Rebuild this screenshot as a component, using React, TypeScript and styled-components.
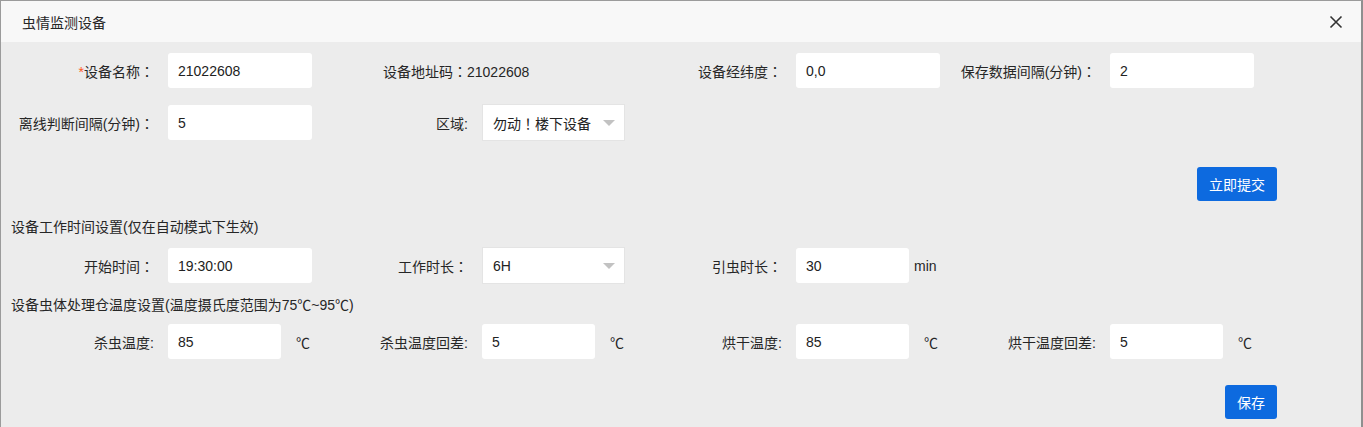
import React from 'react';
import styled, { createGlobalStyle } from 'styled-components';

const GlobalStyle = createGlobalStyle`
  html, body {
    margin: 0;
    padding: 0;
    background: #8f8f8f;
  }
  body {
    font-family: "Liberation Sans", "Noto Sans CJK SC", sans-serif;
    font-size: 14px;
    color: #262626;
  }
`;

const Dialog = styled.div`
  width: 1360px;
  height: 426px;
  border-left: 1px solid #9b9b9b;
  border-top: 1px solid #9b9b9b;
  border-right: 2px solid #8f8f8f;
  background: #ececec;
  overflow: hidden;
`;

const Header = styled.div`
  height: 41px;
  background: #f8f8f8;
  display: flex;
  align-items: center;
  justify-content: space-between;
  padding: 0 18px 0 21px;
`;

const Title = styled.span`
  font-size: 14px;
  color: #262626;
`;

const CloseButton = styled.button`
  border: none;
  background: none;
  padding: 0;
  width: 14px;
  height: 14px;
  display: flex;
  cursor: pointer;
`;

const Body = styled.div`
  padding-top: 11px;
`;

const FormRow = styled.div<{ $mt?: number }>`
  display: grid;
  grid-template-columns: repeat(4, 314px);
  align-items: center;
  margin-top: ${p => p.$mt ?? 0}px;
`;

const Field = styled.div`
  display: flex;
  align-items: center;
`;

const Label = styled.label`
  width: 153px;
  margin-right: 14px;
  text-align: right;
  white-space: nowrap;
  color: #262626;
`;

// full-width punctuation sits centred in the em box, as in the original font
const Punct = styled.span`
  font-family: "Noto Sans CJK TC", sans-serif;
`;

const Required = styled.span`
  color: #ff5722;
`;

const Input = styled.input<{ $w?: number }>`
  width: ${p => p.$w ?? 144}px;
  height: 35px;
  box-sizing: border-box;
  border: none;
  border-radius: 3px;
  background: #fff;
  padding: 0 10px;
  font-family: inherit;
  font-size: 14px;
  color: #222;
  outline: none;
`;

const Select = styled.div`
  width: 143px;
  height: 37px;
  box-sizing: border-box;
  border: 1px solid #e4e4e4;
  background: #fff;
  display: flex;
  align-items: center;
  justify-content: space-between;
  padding: 0 9px 0 10px;
  color: #222;
  white-space: nowrap;
  cursor: pointer;
`;

const Caret = styled.span`
  width: 0;
  height: 0;
  border-top: 6px solid #c2c2c2;
  border-left: 6px solid transparent;
  border-right: 6px solid transparent;
`;

const Unit = styled.span<{ $ml: number }>`
  margin-left: ${p => p.$ml}px;
  color: #262626;
`;

const Plain = styled.div`
  padding-left: 68px;
  white-space: nowrap;
  color: #262626;
`;

const ActionBar = styled.div<{ $mt: number }>`
  display: flex;
  justify-content: flex-end;
  padding-right: 84px;
  margin-top: ${p => p.$mt}px;
`;

const PrimaryButton = styled.button`
  height: 34px;
  padding: 0 12px;
  border: none;
  border-radius: 3px;
  background: #0d6adf;
  color: #fff;
  font-family: inherit;
  font-size: 14px;
  cursor: pointer;
`;

const SectionTitle = styled.div<{ $mt: number; $mb: number }>`
  padding-left: 10px;
  line-height: 20px;
  margin-top: ${p => p.$mt}px;
  margin-bottom: ${p => p.$mb}px;
  color: #262626;
`;

const CloseIcon = () => (
  <svg width="14" height="14" viewBox="0 0 14 14">
    <path d="M1.5 1.5 L12.5 12.5 M12.5 1.5 L1.5 12.5" stroke="#333" strokeWidth="1.6" fill="none" />
  </svg>
);

// wrap full-width ：and ！ so they render centred
const cjk = (text: string) =>
  text.split(/([：！])/).map((part, i) =>
    part === '：' || part === '！' ? <Punct key={i}>{part}</Punct> : part
  );

const temps = [
  { label: '杀虫温度:', value: '85' },
  { label: '杀虫温度回差:', value: '5' },
  { label: '烘干温度:', value: '85' },
  { label: '烘干温度回差:', value: '5' },
];

export default function App() {
  return (
    <>
      <GlobalStyle />
      <Dialog>
        <Header>
          <Title>虫情监测设备</Title>
          <CloseButton aria-label="close">
            <CloseIcon />
          </CloseButton>
        </Header>
        <Body>
          <FormRow>
            <Field>
              <Label><Required>*</Required>{cjk('设备名称：')}</Label>
              <Input defaultValue="21022608" />
            </Field>
            <Plain>{cjk('设备地址码：21022608')}</Plain>
            <Field>
              <Label>{cjk('设备经纬度：')}</Label>
              <Input defaultValue="0,0" />
            </Field>
            <Field>
              <Label>{cjk('保存数据间隔(分钟)：')}</Label>
              <Input defaultValue="2" />
            </Field>
          </FormRow>
          <FormRow $mt={16}>
            <Field>
              <Label>{cjk('离线判断间隔(分钟)：')}</Label>
              <Input defaultValue="5" />
            </Field>
            <Field>
              <Label>区域:</Label>
              <Select>
                <span>{cjk('勿动！楼下设备')}</span>
                <Caret />
              </Select>
            </Field>
          </FormRow>
          <ActionBar $mt={26}>
            <PrimaryButton>立即提交</PrimaryButton>
          </ActionBar>

          <SectionTitle $mt={16} $mb={10}>设备工作时间设置(仅在自动模式下生效)</SectionTitle>
          <FormRow>
            <Field>
              <Label>{cjk('开始时间：')}</Label>
              <Input defaultValue="19:30:00" />
            </Field>
            <Field>
              <Label>{cjk('工作时长：')}</Label>
              <Select>
                <span>6H</span>
                <Caret />
              </Select>
            </Field>
            <Field>
              <Label>{cjk('引虫时长：')}</Label>
              <Input $w={113} defaultValue="30" />
              <Unit $ml={5}>min</Unit>
            </Field>
          </FormRow>

          <SectionTitle $mt={11} $mb={9}>设备虫体处理仓温度设置(温度摄氏度范围为75℃~95℃)</SectionTitle>
          <FormRow>
            {temps.map(t => (
              <Field key={t.label}>
                <Label>{t.label}</Label>
                <Input $w={113} defaultValue={t.value} />
                <Unit $ml={15}>℃</Unit>
              </Field>
            ))}
          </FormRow>
          <ActionBar $mt={26}>
            <PrimaryButton>保存</PrimaryButton>
          </ActionBar>
        </Body>
      </Dialog>
    </>
  );
}
